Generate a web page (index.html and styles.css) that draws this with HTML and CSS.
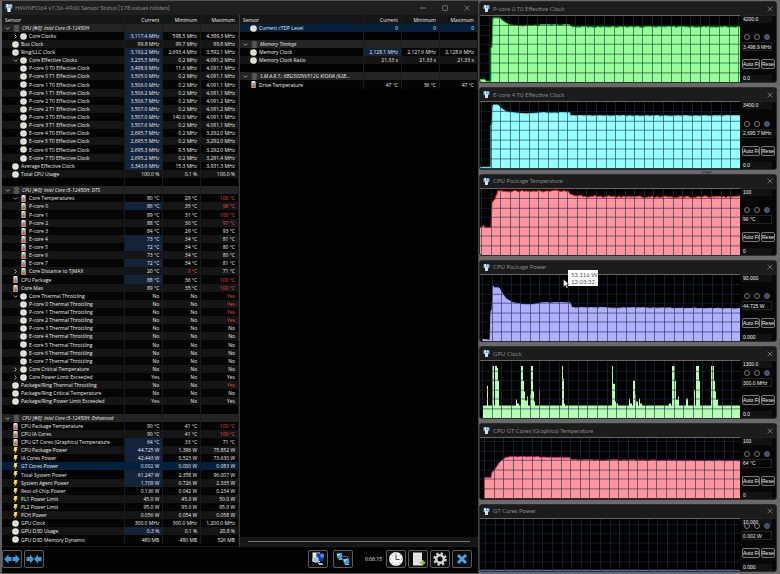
FILE: index.html
```html
<!DOCTYPE html>
<html lang="en">
<head>
<meta charset="utf-8">
<title>HWiNFO64 Sensor Status</title>
<link rel="stylesheet" href="styles.css">
</head>
<body>
<svg class="sprite" aria-hidden="true">
  <symbol id="clock" viewBox="0 0 14 14"><circle cx="7" cy="7" r="6.600" fill="#e6e3db"/><path d="M7 5v2.500h2" fill="none" stroke="#b5b1a8" stroke-width="1"/></symbol>
  <symbol id="temp" viewBox="0 0 14 16"><rect x="2" y="0" width="10" height="16" rx="2" fill="#9cc4de"/><rect x="4" y="0" width="5" height="6" fill="#f3eee8"/><path d="M7 4v9" stroke="#e8763a" stroke-width="4"/><circle cx="7" cy="12" r="3.200" fill="#e0601f"/></symbol>
  <symbol id="bolt" viewBox="0 0 14 16"><path d="M4 0h8L9.500 5H12L4.500 16 6 9H2.500z" fill="#f6c848"/><path d="M6 1h3L6 8" fill="#fff2bb"/></symbol>
  <symbol id="chip" viewBox="0 0 14 14"><path d="M1 2h12M1 5h12M1 9h12M1 12h12" stroke="#777" stroke-width="1"/><rect x="3" y="0" width="8" height="14" fill="#565656"/></symbol>
  <symbol id="down" viewBox="0 0 10 10"><path d="M1.500 3L5 6.500 8.500 3" fill="none" stroke="#bbb" stroke-width="1.800"/></symbol>
  <symbol id="right" viewBox="0 0 10 10"><path d="M3 1l4 4-4 4" fill="none" stroke="#bbb" stroke-width="1.800"/></symbol>
  <symbol id="logo" viewBox="0 0 16 16"><path d="M1 1h14v8H1z" fill="#4f9cc9"/><path d="M3 0h4v6H3zM9 1h4v4H9z" fill="#dff2fb"/><path d="M4 7h8l-1 9H5z" fill="#dbe4e9"/></symbol>
  <symbol id="close" viewBox="0 0 10 10"><path d="M1 1l8 8M9 1L1 9" stroke="#777" stroke-width="1.500"/></symbol>
</svg>
<div class="desktop">
  <main class="window">
    <header class="titlebar">
      <svg class="logo"><use href="#logo"/></svg>
      <h1>HWiNFO64 v7.36-4960 Sensor Status [178 values hidden]</h1>
      <div class="caption">
        <button aria-label="Minimize"><svg viewBox="0 0 10 10"><path d="M0 5h10" stroke="#888" stroke-width="1.500"/></svg></button>
        <button aria-label="Maximize"><svg viewBox="0 0 10 10"><rect x="1" y="1" width="8" height="8" rx="1" fill="none" stroke="#777" stroke-width="1.500"/></svg></button>
        <button aria-label="Close"><svg><use href="#close"/></svg></button>
      </div>
    </header>
    <div class="tables">
      <div class="pane"><table id="cpu"></table></div>
      <div class="pane"><table id="memory"></table><div class="scroll"><span></span></div></div>
    </div>
    <footer class="toolbar">
      <button class="tool" aria-label="Expand columns"><svg viewBox="0 0 32 28"><path d="M0 14l9-9v5h6v8H9v5zM32 14l-9-9v5h-6v8h6v5z" fill="#3b9be0"/></svg></button>
      <button class="tool" aria-label="Shrink columns"><svg viewBox="0 0 32 28"><path d="M16 14L8 5v5H1v8h7v5zM16 14l8-9v5h7v8h-7v5z" fill="#3b9be0"/></svg></button>
      <span class="spacer"></span>
      <button class="tool" aria-label="System summary"><svg viewBox="0 0 32 28"><path d="M5 1h15v19H5z" fill="#e7e9ee"/><path d="M13 2l15 2-2 15-14-2z" fill="#1838b8"/><path d="M21 3l7 1-1 8-6-2z" fill="#5d8cf0"/><circle cx="11" cy="15" r="5.500" fill="#8fc2ed" stroke="#dbe4ea" stroke-width="1.500"/><path d="M15 19l6 7" stroke="#a07a50" stroke-width="3"/><path d="M16 22h8l3 4h-8z" fill="#bbb"/></svg></button>
      <button class="tool wide" aria-label="Remote monitoring"><svg viewBox="0 0 32 28"><path d="M14 9h11v8" fill="none" stroke="#778" stroke-width="1.500"/><path d="M3 3l11-1 1 9-10 2z" fill="#3f9de5"/><path d="M4 4l8-1-7 6z" fill="#a5d8fa"/><path d="M7 13l7-1 2 3-8 1z" fill="#bbb"/><path d="M16 14l12-1 1 9-11 1z" fill="#3f9de5"/><path d="M17 15l9-1-8 6z" fill="#a5d8fa"/><path d="M19 23h8l2 3h-9z" fill="#bbb"/></svg></button>
      <time>0:06:15</time>
      <button class="tool" aria-label="Reset timer"><svg viewBox="0 0 32 28"><circle cx="16" cy="14" r="14" fill="#f4f4f4"/><path d="M16 5v10h7" fill="none" stroke="#444" stroke-width="2"/><path d="M16 1v3M16 24v3M3 14h3M26 14h3M7 5l2 2M23 21l2 2M25 5l-2 2M9 21l-2 2" stroke="#777" stroke-width="1.500"/></svg></button>
      <button class="tool" aria-label="Start logging"><svg viewBox="0 0 32 28"><path d="M6 1h18v26H6z" fill="#e4e4e4"/><path d="M9 7h12M9 11h12M9 15h12M9 19h9" stroke="#d0d0d0"/><path d="M25 16v11M19.500 21.500h11" stroke="#9bcc3c" stroke-width="4"/></svg></button>
      <button class="tool" aria-label="Settings"><svg viewBox="0 0 32 28"><circle cx="16" cy="14" r="11" fill="none" stroke="#d3d5d8" stroke-width="5" stroke-dasharray="4.500 4.140"/><circle cx="16" cy="14" r="7.500" fill="none" stroke="#d3d5d8" stroke-width="5"/></svg></button>
      <button class="tool" aria-label="Close sensors"><svg viewBox="0 0 32 28"><path d="M8 6l16 16M24 6L8 22" stroke="#42a5e8" stroke-width="6"/></svg></button>
    </footer>
  </main>
  <aside class="graphs" id="graphs"></aside>
  <span class="shortcut">User</span>
  <div class="tooltip">53.116 W<br>12:03:32</div>
  <svg class="pointer" viewBox="0 0 10 16"><path d="M1 0v13l3-3 2 5 2-1-2-5h4z" fill="#fff" stroke="#222" stroke-width=".8"/></svg>
</div>
<script src="app.js"></script>
</body>
</html>
```
FILE: styles.css
```css
* { box-sizing: border-box; }
body {
  margin: 0;
  background: #6a6a6a;
  color: #ececec;
  font: 5px/8px "Open Sans", "Noto Sans", sans-serif;
}
h1, h2 { margin: 0; font: 6px/8px Lato, "Liberation Sans", sans-serif; color: #868686; flex: 1; white-space: nowrap; }
button, input { font: inherit; color: inherit; margin: 0; padding: 0; border: 0; background: none; }
svg { display: block; }
.sprite { position: absolute; width: 0; height: 0; }
.desktop { position: relative; display: grid; grid-template-columns: 479fr 298fr; padding-right: 3px; min-height: 100vh; }

.window { display: flex; flex-direction: column; min-width: 0; background: #020202; border: 1px solid #555; border-left-width: 2px; border-left-color: #606468; border-right-color: #444; }
.titlebar { display: flex; align-items: center; height: 14px; padding: 0 8px 0 3px; background: #1f1f1f; }
.titlebar .logo { width: 8px; height: 8px; margin-right: 2px; flex: none; }
.caption { display: flex; gap: 16px; }
.caption button, .x { width: 6px; height: 6px; }
.caption svg, .x svg { width: 6px; height: 6px; }

.tables { display: grid; grid-template-columns: 1fr 1fr; flex: 1; }
.pane { display: flex; flex-direction: column; min-width: 0; border-right: 1px solid #3a3a3a; border-bottom: 1px solid #1c1c1c; }
.pane:last-child { border-right: 0; }
table { width: 100%; border-collapse: collapse; table-layout: fixed; }
th, td { padding: 0 3px 0 0; height: 8px; text-align: right; font-weight: 400; white-space: nowrap; border-right: 1px solid #171b22; overflow: hidden; line-height: 8px; }
th:first-child, td:first-child { width: 52%; text-align: left; }
thead th { background: #161616; height: 9px; }
thead th:first-child { padding-left: 3px; }
tbody tr:nth-child(even) { background: #050505; }
tbody tr:nth-child(odd) { background: #141514; }
tbody tr.blank { background: none; }
tbody tr:nth-child(8n) td { height: 9px; }
tbody tr.group { background: #242424; font-style: italic; }
tbody tr.selected { background: #05203c; }
td.hot { background: #14233c; }
td.alert { color: #ea4a40; }
.name { display: flex; align-items: center; height: 8px; }
.name svg { flex: none; width: 7px; height: 7px; }
.name .arrow { width: 5px; height: 5px; margin: 0 2px 0 3px; }
.name .icon { margin-right: 2px; }
.group .name .icon { margin-left: 1px; }
.name .pad { flex: none; width: 8px; }
.name .none { flex: none; width: 10px; }
.scroll { margin-top: auto; height: 9px; padding: 4px 8px; background: #161616; }
.scroll span { display: block; height: 1px; background: #777; }

.toolbar { display: flex; align-items: center; gap: 2px; height: 26px; padding: 0 6px 3px 0; }
.spacer { flex: 1; }
.tool { width: 20px; height: 18px; border: 1px solid #5c5c5c; border-radius: 2px; background: #0b0b0b; }
.tool svg { width: 16px; height: 14px; margin: 0 auto; }
.wide { margin-left: 3px; }
.toolbar time { margin: 0 2px 0 10px; }

.graphs { display: grid; grid-template-rows: 82fr 82fr 82fr 82fr 73fr 76fr 68fr; gap: 4px; padding: 1px 0 2px; height: 100vh; min-width: 0; }
.graph { display: flex; flex-direction: column; min-height: 0; overflow: hidden; background: #070707; border: 1px solid #2c2c2c; border-radius: 3px; }
.graph header { display: flex; align-items: center; flex: none; height: 13px; padding: 0 3px; background: #1c1c1c; }
.graph header svg { width: 7px; height: 7px; }
.graph header .x svg { width: 6px; height: 6px; }
.graph h2 { margin-left: 3px; }
.graph .body { display: grid; grid-template-columns: 1fr 36px; flex: 1; min-height: 0; }
.plot { width: 100%; height: 100%; background: #000; border-top: 1px solid #666; min-height: 0; }
.side { position: relative; display: flex; flex-direction: column; justify-content: flex-end; padding-left: 2px; border-top: 1px solid #222; min-height: 0; font-family: "Liberation Sans", Arial, sans-serif; }
.side input[type="text"] { width: 30px; height: 7px; padding-left: 1px; background: #131313; line-height: 7px; }
.side .top { position: absolute; top: 0; }
.side input.value { border: 1px solid #222; padding: 0; background: #060606; margin: 1px 0 8px; height: 9px; }
.radios { position: relative; display: flex; gap: 4px; padding-left: 2px; margin-bottom: 1px; }
.radios input { appearance: none; width: 6px; height: 6px; border: 1px solid #777; border-radius: 50%; }
.radios input:checked { background: #3c4e6c; border-color: #50627c; }
.acts { display: flex; gap: 1px; margin-bottom: 6px; }
.acts button { height: 10px; border: 1px solid #777; border-radius: 2px; background: #111; line-height: 8px; flex: none; overflow: hidden; white-space: nowrap; }
.acts button:first-child { width: 18px; }
.acts button:last-child { width: 14px; }

.tooltip { position: absolute; left: 568px; top: 270px; padding: 1px 3px 0; width: 30px; height: 16px; background: #fff; color: #555; font: 6px/7px Lato, "Liberation Sans", sans-serif; white-space: nowrap; }
.pointer { position: absolute; left: 563px; top: 279px; width: 6px; height: 10px; }
.shortcut { position: absolute; left: 701px; top: 169px; height: 5px; overflow: hidden; color: #222; line-height: 6px; }
```
FILE: app.js
```js
// name | current | minimum | maximum | icon | level | flags
// flags: h = highlighted current value, s = selected row, v / > = open or closed arrow, 1-3 = column in red
const cpu = `#CPU [#0]: Intel Core i5-12450H
Core Clocks|3,117.4 MHz|598.5 MHz|4,389.3 MHz|clock|2|h>
Bus Clock|99.8 MHz|99.7 MHz|99.8 MHz|clock|1|
Ring/LLC Clock|3,192.2 MHz|2,693.4 MHz|3,592.1 MHz|clock|1|h
Core Effective Clocks|3,235.5 MHz|0.2 MHz|4,091.2 MHz|clock|2|hv
P-core 0 T0 Effective Clock|3,498.9 MHz|11.6 MHz|4,091.1 MHz|clock|2|h
P-core 0 T1 Effective Clock|3,505.0 MHz|0.2 MHz|4,091.1 MHz|clock|2|h
P-core 1 T0 Effective Clock|3,506.0 MHz|0.2 MHz|4,091.1 MHz|clock|2|h
P-core 1 T1 Effective Clock|3,506.2 MHz|0.2 MHz|4,091.1 MHz|clock|2|h
P-core 2 T0 Effective Clock|3,506.7 MHz|0.2 MHz|4,091.2 MHz|clock|2|h
P-core 2 T1 Effective Clock|3,507.0 MHz|0.2 MHz|4,091.2 MHz|clock|2|h
P-core 3 T0 Effective Clock|3,507.0 MHz|140.0 MHz|4,091.1 MHz|clock|2|h
P-core 3 T1 Effective Clock|3,507.6 MHz|0.2 MHz|4,091.1 MHz|clock|2|h
E-core 4 T0 Effective Clock|2,695.7 MHz|0.2 MHz|3,292.0 MHz|clock|2|h
E-core 5 T0 Effective Clock|2,695.5 MHz|0.2 MHz|3,292.0 MHz|clock|2|h
E-core 6 T0 Effective Clock|2,695.3 MHz|9.5 MHz|3,292.0 MHz|clock|2|h
E-core 7 T0 Effective Clock|2,695.2 MHz|0.2 MHz|3,291.4 MHz|clock|2|h
Average Effective Clock|3,343.6 MHz|15.3 MHz|3,931.3 MHz|clock|1|h
Total CPU Usage|100.0 %|0.1 %|100.0 %|clock|1|

#CPU [#0]: Intel Core i5-12450H: DTS
Core Temperatures|80 °C|29 °C|100 °C|temp|2|v3
P-core 0|86 °C|35 °C|98 °C|temp|2|h3
P-core 1|89 °C|31 °C|100 °C|temp|2|3
P-core 2|88 °C|30 °C|97 °C|temp|2|3
P-core 3|84 °C|29 °C|93 °C|temp|2|
E-core 4|73 °C|34 °C|81 °C|temp|2|h
E-core 5|72 °C|34 °C|80 °C|temp|2|h
E-core 6|73 °C|34 °C|80 °C|temp|2|
E-core 7|72 °C|34 °C|81 °C|temp|2|h
Core Distance to TjMAX|20 °C|0 °C|71 °C|temp|2|>2
CPU Package|88 °C|36 °C|100 °C|temp|1|h3
Core Max|89 °C|35 °C|100 °C|temp|1|3
Core Thermal Throttling|No|No|Yes|clock|2|v3
P-core 0 Thermal Throttling|No|No|Yes|clock|2|3
P-core 1 Thermal Throttling|No|No|Yes|clock|2|3
P-core 2 Thermal Throttling|No|No|Yes|clock|2|3
P-core 3 Thermal Throttling|No|No|No|clock|2|
E-core 4 Thermal Throttling|No|No|No|clock|2|
E-core 5 Thermal Throttling|No|No|No|clock|2|
E-core 6 Thermal Throttling|No|No|No|clock|2|
E-core 7 Thermal Throttling|No|No|No|clock|2|
Core Critical Temperature|No|No|No|clock|2|>
Core Power Limit Exceeded|Yes|No|Yes|clock|2|>
Package/Ring Thermal Throttling|No|No|Yes|clock|1|3
Package/Ring Critical Temperature|No|No|No|clock|1|
Package/Ring Power Limit Exceeded|Yes|No|Yes|clock|1|

#CPU [#0]: Intel Core i5-12450H: Enhanced
CPU Package Temperature|90 °C|41 °C|100 °C|temp|1|3
CPU IA Cores|90 °C|41 °C|100 °C|temp|1|3
CPU GT Cores (Graphics) Temperature|64 °C|33 °C|71 °C|temp|1|h
CPU Package Power|44.725 W|1.396 W|75.852 W|bolt|1|h
IA Cores Power|42.443 W|0.523 W|73.630 W|bolt|1|h
GT Cores Power|0.002 W|0.000 W|0.083 W|bolt|1|s
Total System Power|61.247 W|2.358 W|96.007 W|bolt|1|h
System Agent Power|1.709 W|0.726 W|2.335 W|bolt|1|h
Rest-of-Chip Power|0.136 W|0.042 W|0.234 W|bolt|1|
PL1 Power Limit|45.0 W|45.0 W|50.0 W|bolt|1|
PL2 Power Limit|95.0 W|95.0 W|95.0 W|bolt|1|
PCH Power|0.056 W|0.054 W|0.058 W|bolt|1|
GPU Clock|300.0 MHz|300.0 MHz|1,200.0 MHz|clock|1|
GPU D3D Usage|0.3 %|0.1 %|20.8 %|clock|1|h
GPU D3D Memory Dynamic|480 MB|480 MB|526 MB|clock|1|`;
const memory = `Current cTDP Level|0|0|0|clock|1|s

#Memory Timings
Memory Clock|2,128.1 MHz|2,127.6 MHz|2,128.6 MHz|clock|1|h
Memory Clock Ratio|21.33 x|21.33 x|21.33 x|clock|1|

#S.M.A.R.T.: KBG50ZNV512G KIOXIA (92B...
Drive Temperature|47 °C|36 °C|47 °C|temp|1|`;

const use = (id, cls) => `<svg class="${cls}"><use href="#${id}"/></svg>`;
function row(line) {
  const empty = '<td></td><td></td><td></td>';
  if (!line) return `<tr class="blank"><td><div class="name"></div></td>${empty}</tr>`;
  if (line[0] === '#') {
    return `<tr class="group"><td><div class="name">${use('down', 'arrow')}${use('chip', 'icon')}${line.slice(1)}</div></td>${empty}</tr>`;
  }
  const [name, cur, min, max, icon, level, flags] = line.split('|');
  const arrow = flags.includes('v') ? use('down', 'arrow') : flags.includes('>') ? use('right', 'arrow') : '<span class="none"></span>';
  const cells = [cur, min, max].map((value, i) => {
    const cls = [i === 0 && flags.includes('h') && 'hot', flags.includes(i + 1) && 'alert'].filter(Boolean).join(' ');
    return `<td class="${cls}">${value}</td>`;
  }).join('');
  return `<tr class="${flags.includes('s') ? 'selected' : ''}"><td><div class="name">${level === '2' ? '<span class="pad"></span>' : ''}${arrow}${use(icon, 'icon')}${name}</div></td>${cells}</tr>`;
}
function fill(id, text) {
  document.getElementById(id).innerHTML =
    '<thead><tr><th>Sensor</th><th>Current</th><th>Minimum</th><th>Maximum</th></tr></thead><tbody>' +
    text.split('\n').map(row).join('') + '</tbody>';
}
fill('cpu', cpu);
fill('memory', memory);

// GPU clock bursts: start, end, top
const bursts = [[7,8,25],[12,14,5],[15,17,5],[17,18,7],[18,19,20],[36,37,39],[37,39,43],[41,43,5],[43,44,20],[44,45,31],[45,47,40],[47,48,36],[50,51,34],[51,53,5],[53,54,31],[54,55,41],[59,60,29],[82,83,5],[83,84,18],[84,85,43],[132,133,5],[133,135,23],[135,136,41],[136,138,43],[149,150,38],[150,152,43],[153,155,20],[155,156,34],[156,158,41],[159,160,38],[160,162,43],[189,191,43],[192,195,5],[195,196,20],[196,198,39],[198,199,36],[206,208,38],[214,215,29],[216,219,5],[219,220,20],[231,234,5],[234,235,20],[235,236,31],[236,238,39]];
const burstPoints = [[3, 45]];
bursts.forEach(([a, b, y]) => burstPoints.push([a, 45], [a, y], [b, y], [b, 45]));
burstPoints.push([260, 45]);

const graphs = [
  { title: 'P-core 0 T0 Effective Clock', max: '4200.0', min: '0.0', value: '3,498.9 MHz', h: 67, x: 9, fill: '#96ff96', line: '#00e020', jitter: 0.5,
    points: [[0,64],[5,64],[6,66],[11,66],[11,32],[12,32],[13,2],[20,2],[22,4],[26,7],[30,9],[42,10],[60,9],[90,9],[92,11],[260,11]] },
  { title: 'E-core 4 T0 Effective Clock', max: '3400.0', min: '0.0', value: '2,695.7 MHz', h: 67, x: 1, fill: '#96ffff', line: '#50f0f0', jitter: 0.3,
    points: [[0,66],[11,66],[11,23],[12,23],[13,3],[18,3],[22,7],[27,10],[35,11],[46,12],[60,11],[90,11],[90,14],[260,14]] },
  { title: 'CPU Package Temperature', max: '100', min: '0', value: '90 °C', h: 67, x: 1, fill: '#ff969f', line: '#ff2020', jitter: 1,
    points: [[0,39],[4,37],[5,39],[11,39],[12,14],[15,10],[18,2],[88,2],[90,5],[95,7],[150,8],[250,8],[260,7]] },
  { title: 'CPU Package Power', max: '90.000', min: '0.000', value: '44.725 W', h: 67, x: 2, fill: '#b1b0ff', line: '#a8a4ff', jitter: 0.5,
    points: [[2,65],[10,66],[11,36],[12,36],[13,11],[14,13],[19,13],[22,18],[26,24],[33,28],[44,30],[52,30],[62,28],[90,28],[92,33],[260,34]] },
  { title: 'GPU Clock', max: '1300.0', min: '0.0', value: '300.0 MHz', h: 58, x: 2, fill: '#b4ffb4', line: 'none', jitter: 0, points: burstPoints },
  { title: 'CPU GT Cores (Graphics) Temperature', max: '100', min: '0', value: '64 °C', h: 61, x: 4, fill: '#ff969f', line: '#e0207c', jitter: 0.4,
    points: [[4,40],[11,40],[12,35],[16,30],[20,24],[25,20],[30,19],[50,19],[90,20],[92,22],[260,23]] },
  { title: 'GT Cores Power', max: '10.000', min: '0.000', value: '0.002 W', h: 53, x: 5, fill: '#3a6ea8', line: '#4a86c8', jitter: 0, points: [[0,52],[260,52]] }
];

function outline(points, jitter) {
  const out = [points[0]];
  for (let i = 1; i < points.length; i++) {
    const [x0, y0] = points[i - 1], [x1, y1] = points[i];
    if (jitter && x1 - x0 > 15) {
      for (let x = x0 + 2; x < x1; x += 2) {
        const wave = Math.sin(x * 12.9898 + y0) * 43.7;
        const noise = wave - Math.floor(wave) - 0.5;
        out.push([x, Math.max(0.5, y0 + (y1 - y0) * (x - x0) / (x1 - x0) + noise * 2 * jitter)]);
      }
    }
    out.push([x1, y1]);
  }
  return out.map(([x, y]) => `${x} ${Math.round(y * 10) / 10}`).join('L');
}
function plot(g) {
  let grid = '';
  for (let x = g.x; x < 260; x += 9.58) grid += `M${Math.round(x) + 0.5} 0V${g.h}`;
  for (let y = g.h - 10; y > 0; y -= 9.6) grid += `M0 ${Math.round(y) + 0.5}H260`;
  const top = outline(g.points, g.jitter);
  return `<svg class="plot" viewBox="0 0 260 ${g.h}" preserveAspectRatio="none">
    <path d="M${g.points[0][0]} ${g.h}L${top}V${g.h}z" fill="${g.fill}"/>
    <path d="M${top}" fill="none" stroke="${g.line}"/>
    <path d="${grid}" fill="none" stroke="#1a3048" stroke-opacity=".62"/></svg>`;
}
document.getElementById('graphs').innerHTML = graphs.map((g, i) => `
  <section class="graph">
    <header>${use('logo', '')}<h2>${g.title}</h2><button class="x" aria-label="Close ${g.title}">${use('close', '')}</button></header>
    <div class="body">${plot(g)}
      <div class="side">
        <input class="top" type="text" aria-label="Upper limit" value="${g.max}">
        <div class="radios">${[1, 2, 3].map(n => `<input type="radio" name="mode${i}" aria-label="Mode ${n}"${n === 3 ? ' checked' : ''}>`).join('')}</div>
        <input class="value" type="text" aria-label="Current value" value="${g.value}" readonly>
        <div class="acts"><button>Auto Fit</button><button>Reset</button></div>
        <input type="text" aria-label="Lower limit" value="${g.min}">
      </div>
    </div>
  </section>`).join('');
```
